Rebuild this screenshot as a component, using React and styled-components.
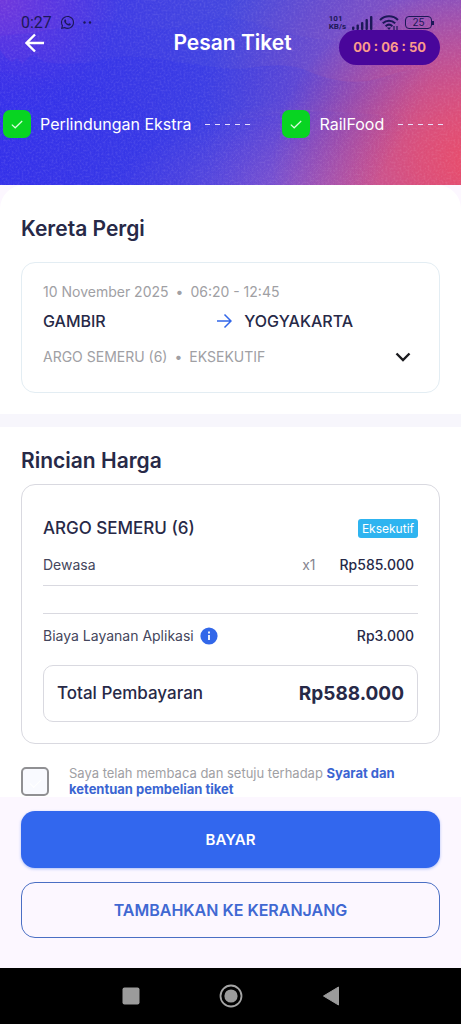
import React, { useState } from "react"
import styled, { createGlobalStyle } from "styled-components"
import { FaWhatsapp } from "react-icons/fa"

const steps = ["Perlindungan Ekstra", "RailFood"]

function App() {
  const [agreed, setAgreed] = useState(false)

  return (
    <Page>
      <GlobalStyle />
      <Header>
        <Scenery />
        <StatusBar>
          <StatusGroup>
            <Clock>0:27</Clock>
            <FaWhatsapp size={15} />
            <Dots viewBox="0 0 9 3" aria-hidden="true">
              <circle cx="1.5" cy="1.5" r="1.2" />
              <circle cx="7" cy="1.5" r="1.2" />
            </Dots>
          </StatusGroup>
          <StatusGroup $tight>
            <Speed>
              101
              <br />
              KB/s
            </Speed>
            <Signal />
            <Wifi />
            <Battery>25</Battery>
          </StatusGroup>
        </StatusBar>
        <TopBar>
          <BackButton type="button" aria-label="Kembali">
            <ArrowIcon viewBox="0 0 20 20" $size={20}>
              <path d="M19 10H2M10 1.5L1.5 10L10 18.5" strokeWidth="2.4" />
            </ArrowIcon>
          </BackButton>
          <Title>Pesan Tiket</Title>
          <Timer>00 : 06 : 50</Timer>
        </TopBar>
        <Steps>
          {steps.map((step) => (
            <Step key={step}>
              <StepMark>
                <svg width="12" height="9" viewBox="0 0 12 9" fill="none" stroke="#dcffe0" strokeWidth="1.2">
                  <path d="M0.8 4.6L4.2 7.8L11.2 1" />
                </svg>
              </StepMark>
              <StepLabel>{step}</StepLabel>
              <Dashes />
            </Step>
          ))}
        </Steps>
      </Header>

      <Sheet>
        <Section $trip>
          <Heading>Kereta Pergi</Heading>
          <TripCard>
            <Muted>
              10 November 2025<Bullet>•</Bullet>06:20 - 12:45
            </Muted>
            <Route>
              <span>GAMBIR</span>
              <ArrowIcon viewBox="0 0 16 16" $size={16} $blue>
                <path d="M1 8H14.5M8.5 1.5L15 8L8.5 14.5" strokeWidth="1.5" />
              </ArrowIcon>
              <span>YOGYAKARTA</span>
            </Route>
            <TrainRow>
              <Muted>
                ARGO SEMERU (6)<Bullet>•</Bullet>EKSEKUTIF
              </Muted>
              <ExpandButton type="button" aria-label="Lihat detail">
                <svg width="16" height="10" viewBox="0 0 16 10" fill="none" stroke="#1b1b1f" strokeWidth="2.4">
                  <path d="M1.5 1.5L8 8L14.5 1.5" />
                </svg>
              </ExpandButton>
            </TrainRow>
          </TripCard>
        </Section>

        <Section>
          <Heading>Rincian Harga</Heading>
          <PriceCard>
            <TrainHead>
              <TrainName>ARGO SEMERU (6)</TrainName>
              <ClassTag>Eksekutif</ClassTag>
            </TrainHead>
            <PriceRow>
              <Label>Dewasa</Label>
              <Count>x1</Count>
              <Price>Rp585.000</Price>
            </PriceRow>
            <Rules />
            <PriceRow>
              <Label>
                Biaya Layanan Aplikasi
                <InfoButton type="button" aria-label="Info biaya layanan">
                  <svg width="18" height="18" viewBox="0 0 18 18">
                    <circle cx="9" cy="9" r="8.6" fill="#3267e9" />
                    <path d="M9 8V13M9 4.6V6.4" stroke="#fff" strokeWidth="1.8" />
                  </svg>
                </InfoButton>
              </Label>
              <Price>Rp3.000</Price>
            </PriceRow>
            <Total>
              <span>Total Pembayaran</span>
              <strong>Rp588.000</strong>
            </Total>
          </PriceCard>
          <Terms>
            <Checkbox id="terms" type="checkbox" checked={agreed} onChange={() => setAgreed(!agreed)} />
            <TermsLabel htmlFor="terms">
              Saya telah membaca dan setuju terhadap <a href="#syarat">Syarat dan ketentuan pembelian tiket</a>
            </TermsLabel>
          </Terms>
        </Section>
      </Sheet>

      <Actions>
        <Button type="button" $primary>BAYAR</Button>
        <Button type="button">TAMBAHKAN KE KERANJANG</Button>
      </Actions>

      <SystemNav>
        <NavButton type="button" aria-label="Aplikasi terbaru">
          <svg width="18" height="18" viewBox="0 0 18 18">
            <rect x="0.5" y="0.5" width="17" height="17" rx="2" fill="#9b9b9b" />
          </svg>
        </NavButton>
        <NavButton type="button" aria-label="Beranda">
          <svg width="24" height="24" viewBox="0 0 24 24">
            <circle cx="12" cy="12" r="10.5" fill="none" stroke="#a5a5a5" strokeWidth="1.8" />
            <circle cx="12" cy="12" r="6.6" fill="#9b9b9b" />
          </svg>
        </NavButton>
        <NavButton type="button" aria-label="Kembali ke layar sebelumnya">
          <svg width="18" height="20" viewBox="0 0 18 20">
            <path d="M1.5 10L16.5 1V19Z" fill="#9b9b9b" stroke="#9b9b9b" strokeLinejoin="round" />
          </svg>
        </NavButton>
      </SystemNav>
    </Page>
  )
}

// layered hills with a light film grain on top
function Scenery() {
  return (
    <Hills viewBox="0 0 461 185" preserveAspectRatio="none" aria-hidden="true">
      <defs>
        <linearGradient id="hill" x1="0" y1="0" x2="1" y2="0.15">
          <stop offset="0.4" stopColor="#2f30ea" />
          <stop offset="0.95" stopColor="#2f30ea" stopOpacity="0" />
        </linearGradient>
        <filter id="grain" x="0" y="0" width="100%" height="100%">
          <feTurbulence type="fractalNoise" baseFrequency="0.5" numOctaves="2" seed="4" />
          <feColorMatrix values="0 0 0 0 1  0 0 0 0 0.85  0 0 0 0 1  1.2 0 0 0 -0.5" />
        </filter>
      </defs>
      <path d="M0 36 L30 33 L60 28 C90 18 110 18 135 27 C170 34 190 22 225 17 C260 20 280 36 330 40 L461 44 V185 H0Z" fill="url(#hill)" opacity="0.16" />
      <path d="M0 50 L6 58 L12 62 L17 58 L22 64 L30 56 L36 55 L44 62 C70 66 95 62 115 57 C150 55 180 64 235 69 C260 68 275 62 300 68 C325 78 340 84 368 81 C395 76 410 62 461 70 V185 H0Z" fill="url(#hill)" opacity="0.34" />
      <path d="M0 72 C50 82 90 78 125 98 C150 114 175 122 215 120 C250 122 300 108 340 112 L461 120 V185 H0Z" fill="url(#hill)" opacity="0.16" />
      <rect width="461" height="185" filter="url(#grain)" opacity="0.22" />
    </Hills>
  )
}

function Signal() {
  return (
    <svg width="21" height="14" viewBox="0 0 21 14" fill="currentColor" aria-hidden="true">
      <rect x="0" y="10.5" width="2.4" height="3.5" rx="1" />
      <rect x="4.5" y="8.5" width="2.4" height="5.5" rx="1" />
      <rect x="9" y="6" width="2.4" height="8" rx="1" />
      <rect x="13.5" y="3" width="2.4" height="11" rx="1" />
      <rect x="18" y="0" width="2.4" height="14" rx="1" />
    </svg>
  )
}

function Wifi() {
  return (
    <svg width="20" height="15" viewBox="0 0 20 15" fill="none" stroke="currentColor" strokeWidth="2" aria-hidden="true">
      <path d="M1 5C6 0 14 0 19 5M3.8 8.2C7.4 4.8 12.6 4.8 16.2 8.2M6.6 11.2C8.6 9.3 11.4 9.3 13.4 11.2" />
      <path d="M8 12.5L10 15L12 12.5Z" fill="currentColor" stroke="none" />
      <path d="M15 15V11M18 11V15" strokeWidth="1.2" />
    </svg>
  )
}

const GlobalStyle = createGlobalStyle`
  * {
    box-sizing: border-box;
  }
  body {
    margin: 0;
    background-color: #fcf7ff;
    color: #272947;
    font-family: "Inter", "Liberation Sans", sans-serif;
    font-size: 14px;
  }
  button {
    padding: 0;
    border: none;
    background: none;
    color: inherit;
    font-family: inherit;
    cursor: pointer;
  }
  svg {
    display: block;
    flex-shrink: 0;
  }
`

const Page = styled.div`
  min-height: 100vh;
  display: flex;
  flex-direction: column;
`

const Header = styled.header`
  position: relative;
  padding: 15px 0 47px;
  overflow: hidden;
  color: white;
  background:
    radial-gradient(ellipse 45% 95% at 104% 88%, #ea4c68 0%, rgba(228, 78, 112, 0.85) 30%, rgba(200, 80, 150, 0) 100%),
    radial-gradient(ellipse 60% 140% at 104% 60%, rgba(190, 84, 165, 0.85) 0%, rgba(140, 86, 200, 0) 100%),
    radial-gradient(ellipse 48% 55% at 72% 108%, rgba(172, 104, 196, 0.9) 0%, rgba(120, 90, 220, 0) 100%),
    radial-gradient(ellipse 26% 60% at 0% 0%, #7038dc 0%, rgba(100, 60, 225, 0) 100%),
    linear-gradient(100deg, #3a30ea 0%, #4549de 50%, #5a50d6 100%);
`

const Hills = styled.svg`
  position: absolute;
  inset: 0;
  width: 100%;
  height: 100%;
`

const StatusBar = styled.div`
  position: relative;
  height: 15px;
  padding: 0 29px 0 21px;
  display: flex;
  justify-content: space-between;
  align-items: center;
  color: #1c1858;
`

const StatusGroup = styled.div`
  display: flex;
  align-items: center;
  gap: ${(props) => (props.$tight ? "6px" : "8px")};
`

const Clock = styled.span`
  font-family: "Roboto", sans-serif;
  font-size: 16px;
  line-height: 16px;
`

const Dots = styled.svg`
  width: 9px;
  height: 3px;
  fill: currentColor;
`

const Speed = styled.span`
  font-family: "Roboto", sans-serif;
  font-size: 8px;
  font-weight: 700;
  line-height: 8px;
`

const Battery = styled.span`
  position: relative;
  width: 27px;
  height: 13px;
  border: 1px solid currentColor;
  border-radius: 4px;
  font-size: 10px;
  line-height: 11px;
  text-align: center;

  &::after {
    content: "";
    position: absolute;
    top: 4px;
    right: -3px;
    width: 2px;
    height: 4px;
    background-color: currentColor;
  }
`

const TopBar = styled.div`
  position: relative;
  padding: 0 21px 0 25px;
  display: grid;
  grid-template-columns: 1fr auto 1fr;
  align-items: start;
`

const BackButton = styled.button`
  width: 20px;
  height: 26px;
  display: flex;
  align-items: center;
`

const ArrowIcon = styled.svg`
  width: ${(props) => props.$size}px;
  height: ${(props) => props.$size}px;
  fill: none;
  stroke: ${(props) => (props.$blue ? "#3267e9" : "white")};
`

const Title = styled.h1`
  margin: 0;
  font-size: 21px;
  font-weight: 600;
  line-height: 26px;
`

const Timer = styled.div`
  justify-self: end;
  padding: 0 14px;
  border-radius: 18px;
  background-color: #49069b;
  color: #fb9c8c;
  font-size: 13px;
  font-weight: 700;
  line-height: 35px;
`

const Steps = styled.ul`
  position: relative;
  margin: 45px 0 0;
  padding: 0 3px;
  display: flex;
  gap: 32px;
  list-style: none;
`

const Step = styled.li`
  display: flex;
  align-items: center;
  flex-shrink: 0;
`

const StepMark = styled.span`
  width: 28px;
  height: 28px;
  display: flex;
  align-items: center;
  justify-content: center;
  border-radius: 7px;
  background-color: #08d422;
`

const StepLabel = styled.span`
  margin: 0 14px 0 9px;
  font-size: 16px;
  line-height: 20px;
`

const Dashes = styled.span`
  width: 45px;
  height: 1px;
  background: repeating-linear-gradient(90deg, #e6defa 0 5px, transparent 5px 10px);
`

const Sheet = styled.main`
  border-radius: 24px 24px 0 0;
  background-color: white;
`

const Section = styled.section`
  padding: ${(props) => (props.$trip ? "30px 21px 21px" : "20px 21px 0")};
  border-bottom: ${(props) => (props.$trip ? "13px solid #f7f6fc" : "none")};
`

const Heading = styled.h2`
  margin: 0;
  font-size: 21px;
  font-weight: 600;
  line-height: 28px;
`

const TripCard = styled.div`
  margin-top: 19px;
  padding: 19px 21px 23px;
  border: 1px solid #e3edf3;
  border-radius: 14px;
`

const Muted = styled.div`
  color: #a0a0a4;
  line-height: 20px;
`

const Bullet = styled.span`
  margin: 0 7px;
`

const Route = styled.div`
  margin: 7px 0 12px;
  display: grid;
  grid-template-columns: 43% 16px 1fr;
  align-items: center;
  column-gap: 12px;
  font-size: 16px;
  font-weight: 500;
  line-height: 24px;
`

const TrainRow = styled.div`
  display: flex;
  align-items: center;
  justify-content: space-between;
`

const ExpandButton = styled.button`
  width: 30px;
  height: 24px;
  display: flex;
  align-items: center;
  justify-content: center;
`

const PriceCard = styled.div`
  margin-top: 9px;
  padding: 31px 21px 21px;
  border: 1px solid #d9d9e0;
  border-radius: 14px;
`

const TrainHead = styled.div`
  display: flex;
  align-items: center;
  justify-content: space-between;
  margin-bottom: 15px;
`

const TrainName = styled.h3`
  margin: 0;
  font-size: 17px;
  font-weight: 500;
  line-height: 24px;
`

const ClassTag = styled.span`
  padding: 0 4px;
  border-radius: 3px;
  background-color: #2eb4f0;
  color: white;
  font-size: 12px;
  line-height: 19px;
`

const PriceRow = styled.div`
  padding-right: 4px;
  display: flex;
  align-items: center;
  line-height: 20px;
`

const Label = styled.span`
  flex: 1;
  display: flex;
  align-items: center;
  gap: 6px;
  color: #44465c;
`

const Count = styled.span`
  margin-right: 24px;
  color: #85858f;
`

const Price = styled.span`
  font-weight: 500;
`

const Rules = styled.div`
  height: 29px;
  margin: 10px 0 12px;
  border-top: 1px solid #d9d9e0;
  border-bottom: 1px solid #d9d9e0;
`

const InfoButton = styled.button`
  display: flex;
`

const Total = styled.div`
  margin-top: 19px;
  padding: 0 13px;
  display: flex;
  align-items: center;
  justify-content: space-between;
  border: 1px solid #d9d9e0;
  border-radius: 10px;
  font-size: 17px;
  font-weight: 500;
  line-height: 55px;

  strong {
    font-size: 19px;
    font-weight: 700;
  }
`

const Terms = styled.div`
  padding-top: 21px;
  display: flex;
  align-items: flex-start;
  gap: 20px;
`

const Checkbox = styled.input`
  appearance: none;
  flex-shrink: 0;
  width: 28px;
  height: 29px;
  margin: 2px 0 0;
  display: grid;
  place-items: center;
  border: 2px solid #909093;
  border-radius: 5px;
  background-color: #f9faff;

  &::before {
    content: "";
    width: 10px;
    height: 5px;
    border-left: 1px solid white;
    border-bottom: 1px solid white;
    transform: rotate(-45deg);
  }

  &:checked {
    background-color: #3267e9;
  }
`

const TermsLabel = styled.label`
  color: #a0a0a4;
  font-size: 13px;
  line-height: 16px;

  a {
    color: #3b65d2;
    font-weight: 700;
    text-decoration: none;
  }
`

const Actions = styled.div`
  flex: 1;
  padding: 14px 21px 30px;
  display: flex;
  flex-direction: column;
  gap: 14px;
`

const Button = styled.button`
  height: ${(props) => (props.$primary ? "57px" : "56px")};
  border-radius: 14px;
  border: ${(props) => (props.$primary ? "none" : "1px solid #4a6fc4")};
  background-color: ${(props) => (props.$primary ? "#3267ee" : "transparent")};
  box-shadow: ${(props) => (props.$primary ? "0 1px 3px #3267ee66" : "none")};
  color: ${(props) => (props.$primary ? "white" : "#4068d2")};
  font-size: ${(props) => (props.$primary ? "15px" : "16px")};
  font-weight: 600;
`

const SystemNav = styled.nav`
  height: 56px;
  display: flex;
  align-items: center;
  justify-content: center;
  gap: 76px;
  background-color: black;
`

const NavButton = styled.button`
  width: 24px;
  height: 24px;
  display: flex;
  align-items: center;
  justify-content: center;
`

export default App
